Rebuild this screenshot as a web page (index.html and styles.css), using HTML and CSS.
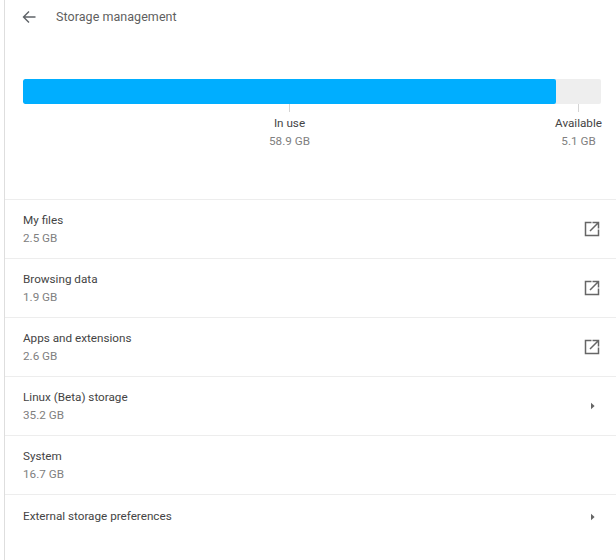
FILE: index.html
```html
<!DOCTYPE html>
<html lang="en">
<head>
<meta charset="utf-8">
<title>Storage management</title>
<link rel="stylesheet" href="styles.css">
</head>
<body>
<main class="page">
  <header class="header">
    <svg class="back" width="16" height="16" viewBox="0 0 16 16"><path d="M13.5 8H2M7 2.5 1.5 8 7 13.5" fill="none" stroke="#5f6368" stroke-width="1.4"/></svg>
    <h1 class="title">Storage management</h1>
  </header>
  <section class="usage">
    <div class="bar"><div class="bar-used"></div></div>
    <div class="legend">
      <div class="legend-item legend-use">
        <span class="tick"></span>
        <span class="legend-label">In use</span>
        <span class="legend-value">58.9 GB</span>
      </div>
      <div class="legend-item legend-free">
        <span class="tick"></span>
        <span class="legend-label">Available</span>
        <span class="legend-value">5.1 GB</span>
      </div>
    </div>
  </section>
  <section class="list">
    <div class="row">
      <div class="text"><div class="name">My files</div><div class="size">2.5 GB</div></div>
      <svg class="open" width="16" height="16" viewBox="0 0 16 16"><path d="M7.5 1.5h-6v13h13v-6M8.5 1.5h6v6M14.5 1.5 6 10" fill="none" stroke="#666" stroke-width="1.5"/></svg>
    </div>
    <div class="row">
      <div class="text"><div class="name">Browsing data</div><div class="size">1.9 GB</div></div>
      <svg class="open" width="16" height="16" viewBox="0 0 16 16"><path d="M7.5 1.5h-6v13h13v-6M8.5 1.5h6v6M14.5 1.5 6 10" fill="none" stroke="#666" stroke-width="1.5"/></svg>
    </div>
    <div class="row">
      <div class="text"><div class="name">Apps and extensions</div><div class="size">2.6 GB</div></div>
      <svg class="open" width="16" height="16" viewBox="0 0 16 16"><path d="M7.5 1.5h-6v13h13v-6M8.5 1.5h6v6M14.5 1.5 6 10" fill="none" stroke="#666" stroke-width="1.5"/></svg>
    </div>
    <div class="row">
      <div class="text"><div class="name">Linux (Beta) storage</div><div class="size">35.2 GB</div></div>
      <svg class="caret" width="6" height="8" viewBox="0 0 6 8"><path d="M1 .8 4.6 4 1 7.2z" fill="#666"/></svg>
    </div>
    <div class="row">
      <div class="text"><div class="name">System</div><div class="size">16.7 GB</div></div>
    </div>
    <div class="row row-single">
      <div class="name">External storage preferences</div>
      <svg class="caret" width="6" height="8" viewBox="0 0 6 8"><path d="M1 .8 4.6 4 1 7.2z" fill="#666"/></svg>
    </div>
  </section>
</main>
</body>
</html>
```
FILE: styles.css
```css
* { box-sizing: border-box; }
html, body { margin: 0; height: 100%; background: #fff; }
body { font-family: Roboto, "Liberation Sans", sans-serif; overflow: hidden; padding-left: 4px; }
.page { width: 612px; height: 560px; border-left: 1px solid #dedede; }
.header { height: 33px; display: flex; align-items: center; padding-left: 18px; }
.back { flex: none; margin-left: -1px; margin-right: 1px; }
.title { margin: 0 0 0 17px; font-size: 12.5px; font-weight: 400; color: #5f5f5f; letter-spacing: .05px; }
.usage { padding: 46px 15px 0 18px; height: 166px; }
.bar { height: 25px; background: #eeeeee; border-radius: 2px; overflow: hidden; }
.bar-used { width: 533px; height: 100%; background: #00aeff; border-radius: 2px; }
.legend { display: flex; }
.legend-item { display: flex; flex-direction: column; align-items: center; }
.legend-use { width: 533px; flex: none; }
.legend-free { width: 45px; flex: none; }
.tick { width: 1px; height: 8px; background: #d4d4d4; }
.legend-label { margin-top: 3px; font-size: 11.7px; line-height: 17px; color: #444; white-space: nowrap; }
.legend-value { margin-top: 1px; font-size: 11.7px; line-height: 17px; color: #808080; }
.row { height: 59px; border-top: 1px solid #ededed; display: flex; align-items: center; justify-content: space-between; padding: 0 15px 0 18px; }
.row-single { height: 44px; }
.name { font-size: 11.7px; line-height: 17px; color: #444; }
.size { margin-top: 1px; font-size: 11.7px; line-height: 17px; color: #808080; }
.text { display: flex; flex-direction: column; }
.open { margin-right: 1px; }
.caret { margin-right: 5px; }
```
